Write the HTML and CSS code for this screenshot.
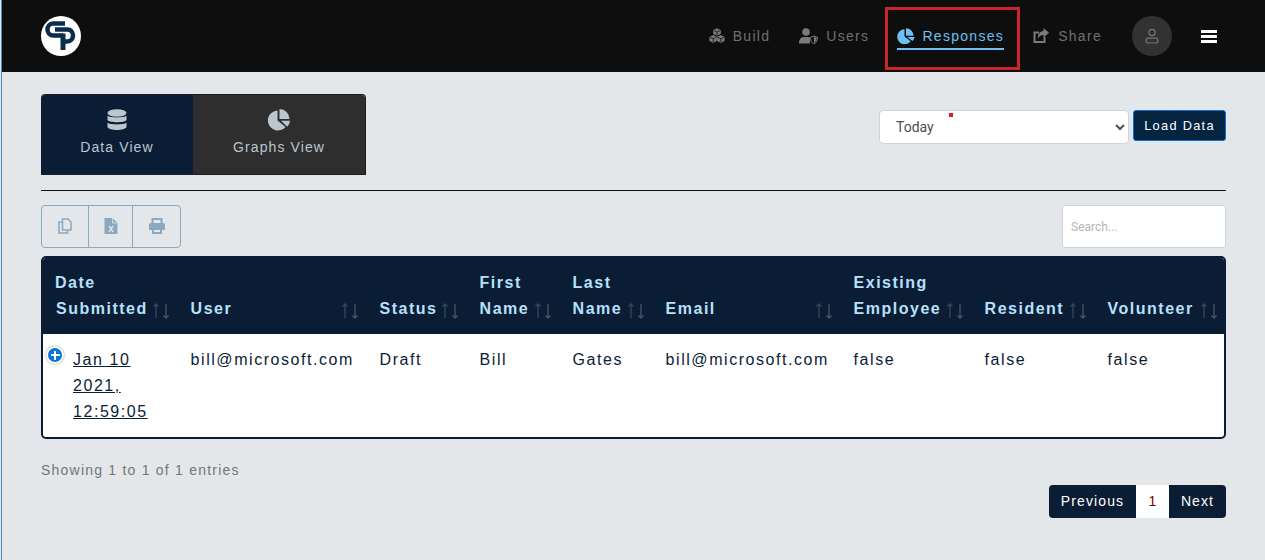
FILE: index.html
```html
<!DOCTYPE html>
<html lang="en">
<head>
<meta charset="utf-8">
<title>Responses</title>
<link rel="stylesheet" href="styles.css">
</head>
<body>
<header class="topbar">
  <svg class="logo" viewBox="0 0 40 40" aria-label="logo">
    <circle cx="20" cy="20" r="20" fill="#fff"/>
    <path d="M24 7.500H12C8.500 7.500 6.500 10.500 6.500 13.500C6.500 16.500 8.500 19.500 12 19.500H22" fill="none" stroke="#0b2c4d" stroke-width="4.500"/>
    <path d="M14 13.500H26.500C29.500 13.500 32 16 32 19.500C32 23 29.500 25.500 26.500 25.500H22" fill="none" stroke="#0b2c4d" stroke-width="4.500"/>
    <path d="M22 17.500V34" fill="none" stroke="#0b2c4d" stroke-width="5"/>
  </svg>
  <nav class="nav">
    <a class="nav-item">
      <svg class="nav-icon" viewBox="0 0 16 16"><path d="M8 .8l3.400 1.400v3.600L8 7.200 4.600 5.800V2.200zM4.200 7.600l3.400 1.400v3.700l-3.400 1.700L.8 12.700V9zM11.800 7.600l3.400 1.400v3.700l-3.400 1.700-3.400-1.700V9z" fill="#7b7b7b" stroke="#7b7b7b" stroke-width=".8"/><path d="M4.800 2.600L8 4l3.200-1.400M1 9.300l3.200 1.400 3.200-1.400M8.600 9.300l3.200 1.400 3.200-1.400M8 4v3M4.200 10.700v3.500M11.800 10.700v3.500" fill="none" stroke="#0e0e0e" stroke-width=".8"/></svg>
      <span>Build</span>
    </a>
    <a class="nav-item nav-users">
      <svg class="nav-icon nav-icon-wide" viewBox="0 0 19 16"><circle cx="7" cy="4" r="3.800" fill="#7b7b7b"/><path d="M0 15.500c0-4.500 2-6.500 5-6.500h4c1 0 1.500.2 2 .5v6z" fill="#7b7b7b"/><path d="M15 8l3.500 1.300c0 3-1 5.500-3.500 6.700-2.500-1.200-3.500-3.700-3.500-6.700z" fill="#0e0e0e" stroke="#7b7b7b" stroke-width="1"/><path d="M15 9v6c1.800-1 2.600-3 2.600-5.200z" fill="#7b7b7b"/></svg>
      <span>Users</span>
    </a>
    <a class="nav-item nav-active">
      <svg class="nav-icon nav-icon-pie" viewBox="0 0 18 16"><path d="M7.500 1.200a7.500 7.500 0 1 0 6.200 12L7.500 8.500z" fill="#6cc0f5"/><path d="M9 .2a7.500 7.500 0 0 1 7.500 7.500H9z" fill="#6cc0f5"/><path d="M10 9h7.500a8 8 0 0 1-1.900 4z" fill="#6cc0f5"/></svg>
      <span class="nav-label-active">Responses</span>
    </a>
    <a class="nav-item nav-share">
      <svg class="nav-icon" viewBox="0 0 16 16"><path d="M11.500 9v5h-10V4.500H6" fill="none" stroke="#7b7b7b" stroke-width="2"/><path d="M10.500 0L16 4.700 10.500 9.500V7C7.500 7 5.800 8.300 5 11c-.500-4.500 1.500-7.700 5.500-8z" fill="#7b7b7b"/></svg>
      <span>Share</span>
    </a>
  </nav>
  <div class="avatar">
    <svg viewBox="0 0 14 16" class="avatar-icon"><circle cx="7" cy="4.500" r="3.200" fill="none" stroke="#77777a" stroke-width="1.200"/><rect x="1.200" y="10.200" width="11.600" height="4.800" rx="1.600" fill="none" stroke="#77777a" stroke-width="1.200"/></svg>
  </div>
  <div class="burger"><i></i><i></i><i></i></div>
</header>
<div class="callout"></div>

<main class="page">
  <div class="toolbar-top">
    <div class="tabs">
      <div class="tab tab-active">
        <svg class="tab-icon" viewBox="0 0 20 22"><ellipse cx="10" cy="4" rx="9.500" ry="3.800" fill="#bcc6cf"/><path d="M.5 6.500C2 9 18 9 19.500 6.500V11C18 14 2 14 .5 11zM.5 13.500C2 16 18 16 19.500 13.500V18C18 22 2 22 .5 18z" fill="#bcc6cf"/></svg>
        <span>Data View</span>
      </div>
      <div class="tab">
        <svg class="tab-icon" viewBox="0 0 24 22"><path d="M10.500 1.500a10 10 0 1 0 8 16.500L10.500 11.500z" fill="#bcc6cf"/><path d="M12.500 0a10 10 0 0 1 10 10h-10z" fill="#bcc6cf"/><path d="M14 11.800h9a10 10 0 0 1-2.800 6z" fill="#bcc6cf"/></svg>
        <span>Graphs View</span>
      </div>
    </div>
    <div class="loader">
      <select class="range"><option>Today</option></select>
      <button class="load-btn">Load Data</button>
    </div>
  </div>
  <hr class="rule">
  <div class="toolbar-table">
    <div class="exports">
      <button class="export">
        <svg viewBox="0 0 14 16" class="export-icon"><path d="M4.500 1h5.500l3 3v8H4.500z" fill="none" stroke="#8aa8bf" stroke-width="1.500"/><path d="M4.500 4H1v11h8.500v-3" fill="none" stroke="#8aa8bf" stroke-width="1.500"/></svg>
      </button>
      <button class="export export-narrow">
        <svg viewBox="0 0 13 16" class="export-icon"><path d="M0 0h8l5 5v11H0z" fill="#8aa8bf"/><path d="M8 0v5h5" fill="none" stroke="#e3e7ea" stroke-width=".8"/><text x="6.500" y="13.500" class="xls-x">x</text></svg>
      </button>
      <button class="export">
        <svg viewBox="0 0 16 16" class="export-icon export-icon-print"><path d="M3.500 6V1h9v5" fill="none" stroke="#8aa8bf" stroke-width="2"/><path d="M0 6.500Q0 5 2 5h12q2 0 2 1.500V12h-3v-2H3v2H0z" fill="#8aa8bf"/><path d="M4 11h8v4H4z" fill="none" stroke="#8aa8bf" stroke-width="2"/></svg>
      </button>
    </div>
    <input class="search" type="text" placeholder="Search...">
  </div>

  <div class="table-wrap">
    <table class="data-table">
      <colgroup>
        <col class="c1"><col class="c2"><col class="c3"><col class="c4"><col class="c5"><col class="c6"><col class="c7"><col class="c8"><col class="c9">
      </colgroup>
      <thead>
        <tr>
          <th>Date<br><span class="sub">Submitted</span><svg class="sort" viewBox="0 0 16 16"><path class="sort-up" d="M3 15V1M.5 3.500L3 1l2.500 2.500"/><path d="M13 1v14M10.500 12.500L13 15l2.500-2.500"/></svg></th>
          <th>User<svg class="sort" viewBox="0 0 16 16"><path class="sort-up" d="M3 15V1M.5 3.500L3 1l2.500 2.500"/><path d="M13 1v14M10.500 12.500L13 15l2.500-2.500"/></svg></th>
          <th>Status<svg class="sort" viewBox="0 0 16 16"><path class="sort-up" d="M3 15V1M.5 3.500L3 1l2.500 2.500"/><path d="M13 1v14M10.500 12.500L13 15l2.500-2.500"/></svg></th>
          <th>First<br>Name<svg class="sort" viewBox="0 0 16 16"><path class="sort-up" d="M3 15V1M.5 3.500L3 1l2.500 2.500"/><path d="M13 1v14M10.500 12.500L13 15l2.500-2.500"/></svg></th>
          <th>Last<br>Name<svg class="sort" viewBox="0 0 16 16"><path class="sort-up" d="M3 15V1M.5 3.500L3 1l2.500 2.500"/><path d="M13 1v14M10.500 12.500L13 15l2.500-2.500"/></svg></th>
          <th>Email<svg class="sort" viewBox="0 0 16 16"><path class="sort-up" d="M3 15V1M.5 3.500L3 1l2.500 2.500"/><path d="M13 1v14M10.500 12.500L13 15l2.500-2.500"/></svg></th>
          <th>Existing<br>Employee<svg class="sort" viewBox="0 0 16 16"><path class="sort-up" d="M3 15V1M.5 3.500L3 1l2.500 2.500"/><path d="M13 1v14M10.500 12.500L13 15l2.500-2.500"/></svg></th>
          <th>Resident<svg class="sort" viewBox="0 0 16 16"><path class="sort-up" d="M3 15V1M.5 3.500L3 1l2.500 2.500"/><path d="M13 1v14M10.500 12.500L13 15l2.500-2.500"/></svg></th>
          <th>Volunteer<svg class="sort" viewBox="0 0 16 16"><path class="sort-up" d="M3 15V1M.5 3.500L3 1l2.500 2.500"/><path d="M13 1v14M10.500 12.500L13 15l2.500-2.500"/></svg></th>
        </tr>
      </thead>
      <tbody>
        <tr>
          <td class="date-cell"><span class="expand"></span><a class="date-link">Jan 10 2021, 12:59:05</a></td>
          <td>bill@microsoft.com</td>
          <td>Draft</td>
          <td>Bill</td>
          <td>Gates</td>
          <td>bill@microsoft.com</td>
          <td>false</td>
          <td>false</td>
          <td>false</td>
        </tr>
      </tbody>
    </table>
  </div>

  <div class="info">Showing 1 to 1 of 1 entries</div>
  <div class="pager">
    <a class="page-btn page-prev">Previous</a>
    <a class="page-btn page-num">1</a>
    <a class="page-btn page-next">Next</a>
  </div>
</main>
</body>
</html>
```
FILE: styles.css
```css
* { box-sizing: border-box; }
html, body { margin: 0; padding: 0; }
body {
  position: relative;
  height: 560px;
  overflow: hidden;
  background: #e3e7ea;
  font-family: "Liberation Sans", Arial, sans-serif;
  letter-spacing: 1px;
  color: #0b1d35;
  border-left: 1px solid #e3e7ea;
}
body::before {
  content: "";
  position: absolute;
  left: 0;
  top: 0;
  bottom: 0;
  width: 1px;
  background: #4a88c0;
  z-index: 5;
}
.topbar {
  display: flex;
  align-items: center;
  height: 72px;
  background: #0e0e0e;
  padding-left: 40px;
}
.logo { width: 40px; height: 40px; flex: none; }
.nav { display: flex; align-items: center; margin-left: auto; }
.nav-item {
  display: flex;
  align-items: center;
  gap: 8px;
  color: #707070;
  font-size: 14px;
  letter-spacing: 1.300px;
  margin-right: 29px;
}
.nav-icon { width: 16px; height: 16px; flex: none; }
.nav-icon-wide { width: 19px; }
.nav-icon-pie { width: 18px; }
.nav-users { margin-right: 28px; }
.nav-active { color: #6cc0f5; margin-right: 29px; gap: 7px; }
.nav-share { gap: 9px; margin-right: 30px; }
.nav-label-active { display: block; }
.nav-active { position: relative; }
.nav-active::after {
  content: "";
  position: absolute;
  left: 0;
  right: 0;
  bottom: -6px;
  height: 2px;
  background: #6cc0f5;
}
.avatar {
  width: 40px;
  height: 40px;
  border-radius: 50%;
  background: #323232;
  display: flex;
  align-items: center;
  justify-content: center;
  flex: none;
}
.avatar-icon { width: 14px; height: 16px; }
.burger {
  display: flex;
  flex-direction: column;
  gap: 2px;
  width: 16px;
  margin: 0 48px 0 29px;
  flex: none;
}
.burger i { display: block; height: 3px; background: #fff; }
.callout {
  position: absolute;
  left: 884px;
  top: 7px;
  width: 135px;
  height: 63px;
  border: 3px solid #c9252d;
}
.callout::after {
  content: "";
  position: absolute;
  left: 61px;
  top: 103px;
  width: 4px;
  height: 4px;
  background: #e11b22;
}
.page { padding: 22px 39px 0 40px; }
.toolbar-top { display: flex; justify-content: space-between; align-items: flex-start; }
.tabs {
  display: flex;
  width: 325px;
  height: 81px;
  border-radius: 4px 4px 0 0;
  overflow: hidden;
  font-size: 14px;
  letter-spacing: 1.100px;
  color: #bcc6cf;
  border: 1px solid #1d1d1d;
  border-left: 0;
}
.tab {
  flex: 1;
  display: flex;
  flex-direction: column;
  align-items: center;
  background: #2e2e2e;
  padding-top: 14px;
  gap: 8px;
}
.tab-active { flex: none; width: 152px; background: #0b1d35; }
.tab-icon { height: 22px; width: 24px; }
.loader { display: flex; gap: 4px; margin-top: 16px; }
.range {
  width: 250px;
  height: 34px;
  background: #fff;
  border: 1px solid #ced4da;
  border-radius: 4px;
  font-family: Roboto, sans-serif;
  font-size: 14px;
  letter-spacing: 0;
  color: #495057;
  padding-left: 12px;
}
.load-btn {
  width: 93px;
  height: 31px;
  background: #04243f;
  border: 1px solid #0b74d8;
  border-radius: 3px;
  color: #fff;
  font: 12.800px "Liberation Sans", Arial, sans-serif;
  letter-spacing: 1.280px;
  padding: 0;
}
.rule { margin: 15px 0 14px; border: 0; border-top: 1px solid #111; }
.toolbar-table { display: flex; justify-content: space-between; height: 43px; }
.exports {
  display: flex;
  border: 1px solid #8aa8bf;
  border-radius: 4px;
  width: 140px;
}
.export {
  flex: none;
  width: 47px;
  background: transparent;
  border: 0;
  border-right: 1px solid #8aa8bf;
  padding: 0 0 2px;
  display: flex;
  align-items: center;
  justify-content: center;
}
.export:last-child { border-right: 0; flex: 1; }
.export-narrow { width: 44px; }
.export-icon { width: 14px; height: 16px; }
.export-icon-print { width: 16px; }
.xls-x { fill: #e3e7ea; font: bold 10px "Liberation Sans", Arial, sans-serif; text-anchor: middle; }
.search {
  width: 164px;
  height: 43px;
  background: #fff;
  border: 1px solid #ced4da;
  border-radius: 3px;
  padding: 0 8px;
  font-family: Roboto, sans-serif;
  font-size: 12px;
  letter-spacing: 0;
}
.search::placeholder { color: #b5b5b5; opacity: 1; }
.table-wrap {
  margin-top: 8px;
  width: 1185px;
  height: 183px;
  border: 2px solid #0b1d35;
  border-radius: 5px;
  background: #fff;
  overflow: hidden;
}
.data-table {
  table-layout: fixed;
  border-collapse: collapse;
  width: 1181px;
}
.c1 { width: 133px; } .c2 { width: 189px; } .c3 { width: 100px; }
.c4 { width: 93px; } .c5 { width: 93px; } .c6 { width: 188px; }
.c7 { width: 131px; } .c8 { width: 123px; } .c9 { width: 131px; }
.data-table th {
  position: relative;
  height: 76px;
  background: #0b1d35;
  color: #b7e0fb;
  font-size: 16px;
  line-height: 26px;
  font-weight: 700;
  letter-spacing: 1.500px;
  text-align: left;
  vertical-align: bottom;
  padding: 0 0 12px 14.600px;
}
.data-table th:first-child { padding-left: 12px; }
.sub { padding-left: 1px; }
.sort {
  position: absolute;
  right: 7px;
  bottom: 15px;
  width: 16px;
  height: 16px;
  fill: none;
  stroke: #45566a;
  stroke-width: 1.300;
}
.sort-up { stroke: #34485d; }
.data-table td {
  vertical-align: top;
  font-size: 16px;
  line-height: 26px;
  letter-spacing: 1.550px;
  padding: 13px 0 0 14.600px;
  color: #0b1d35;
}
.data-table td.date-cell { position: relative; padding-left: 30px; padding-right: 10px; }
.date-link { text-decoration: underline; }
.expand {
  position: absolute;
  left: 3px;
  top: 12px;
  width: 18px;
  height: 18px;
  border-radius: 50%;
  border: 2px solid #fff;
  box-shadow: 0 0 2px #888;
  background: linear-gradient(#fff, #fff) center / 9px 2px no-repeat,
              linear-gradient(#fff, #fff) center / 2px 9px no-repeat,
              #0b74d8;
}
.info { margin-top: 23px; font-size: 14px; line-height: 16px; color: #767676; letter-spacing: 1.220px; }
.pager {
  display: flex;
  justify-content: flex-end;
  margin-top: 7px;
  font-size: 14px;
  line-height: 33px;
  height: 33px;
  letter-spacing: 1.100px;
}
.page-btn { display: block; color: #fff; background: #0b1d35; text-align: center; }
.page-prev { width: 87px; border-radius: 4px 0 0 4px; }
.page-num { width: 33px; background: #fff; color: #7a0000; letter-spacing: 0; }
.page-next { width: 57px; border-radius: 0 4px 4px 0; }
```
